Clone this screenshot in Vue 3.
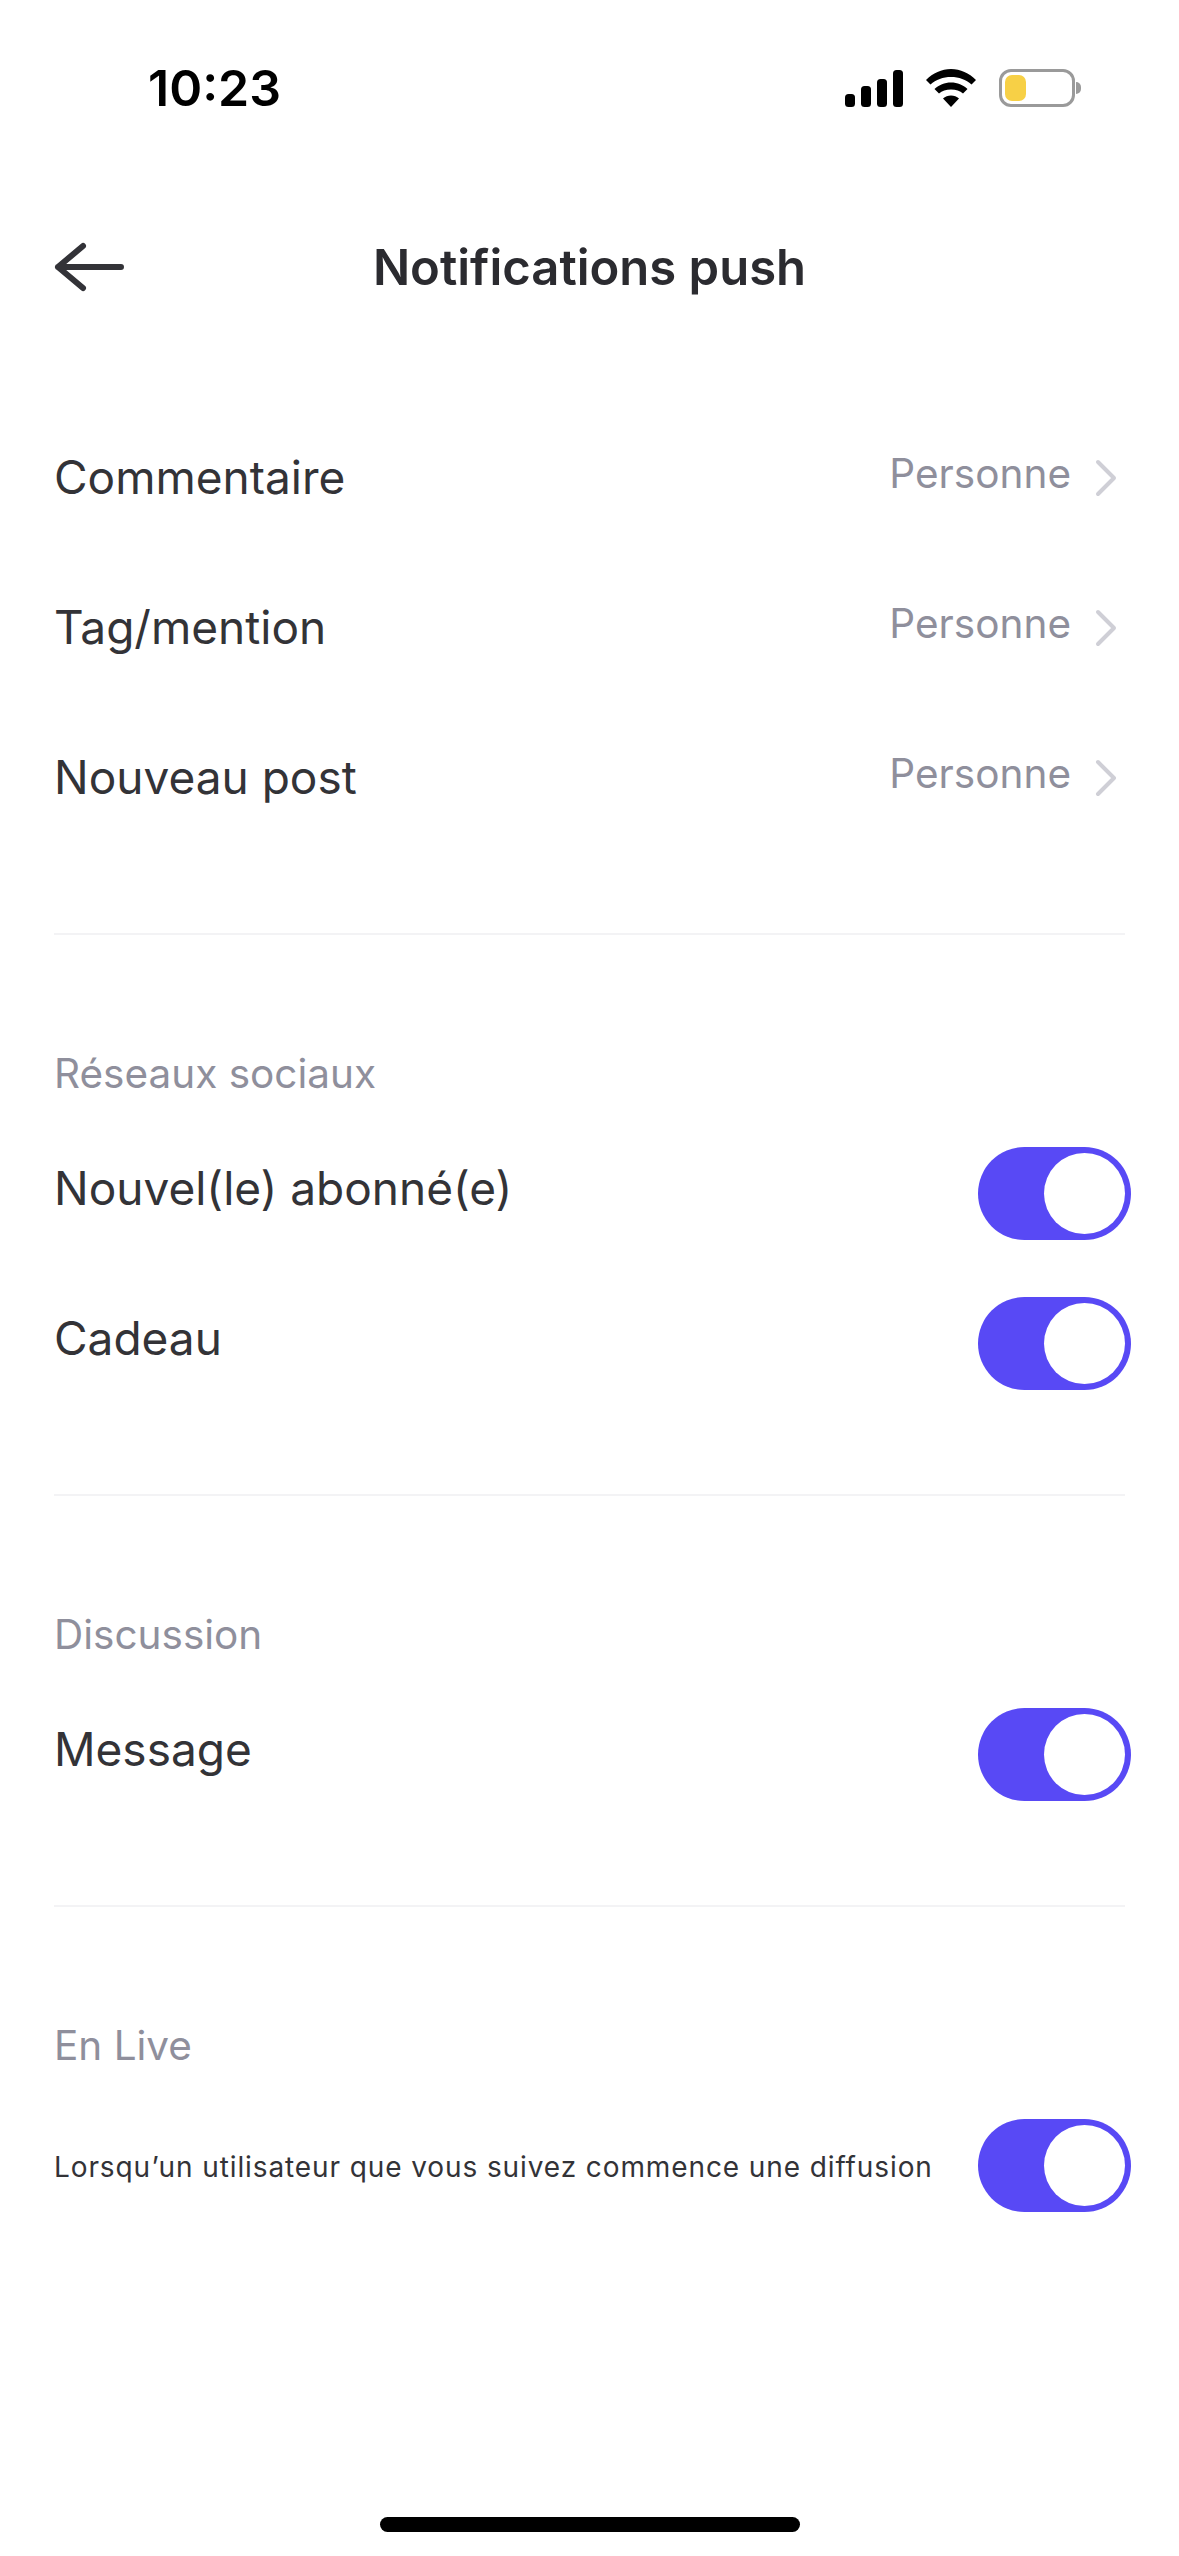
<script setup>
const pushRows = ['Commentaire', 'Tag/mention', 'Nouveau post']

const sections = [
    { title: 'Réseaux sociaux', rows: ['Nouvel(le) abonné(e)', 'Cadeau'] },
    { title: 'Discussion', rows: ['Message'] },
]
</script>

<template>
    <div class="screen">
        <div class="status-bar">
            <span class="status-time">10:23</span>
            <div class="status-icons">
                <svg width="58" height="37" viewBox="0 0 58 37">
                    <rect x="0" y="24" width="10" height="13" rx="3.500" />
                    <rect x="16" y="16" width="10" height="21" rx="3.500" />
                    <rect x="32" y="9" width="10" height="28" rx="3.500" />
                    <rect x="48" y="0" width="10" height="37" rx="3.500" />
                </svg>
                <svg width="50" height="38" viewBox="0 0 50 38">
                    <path d="M25 0C15.500 0 7 4 0 11L4.500 15.500C10 10.500 17 8 25 8S40 10.500 45.500 15.500L50 11C43 4 34.500 0 25 0Z" />
                    <path d="M25 13.500C18.500 13.500 13 16 8.500 20L13 24.500C16 22 20 20.500 25 20.500S34 22 37 24.500L41.500 20C37 16 31.500 13.500 25 13.500Z" />
                    <path d="M25 26.500C22 26.500 19.200 27.500 17 29.500L25 38L33 29.500C30.800 27.500 28 26.500 25 26.500Z" />
                </svg>
                <div class="battery">
                    <div class="battery-body">
                        <div class="battery-fill" />
                    </div>
                    <div class="battery-nub" />
                </div>
            </div>
        </div>

        <div class="nav-bar">
            <svg width="72" height="52" viewBox="0 0 72 52">
                <path d="M30 5L5 26L30 47M5 26H68" fill="none" stroke="#333338" stroke-width="6" stroke-linecap="round" stroke-linejoin="round" />
            </svg>
            <h1 class="nav-title">Notifications push</h1>
        </div>

        <div class="push-group">
            <div v-for="row in pushRows" :key="row" class="row">
                <span class="row-label">{{ row }}</span>
                <div class="row-value">
                    <span class="row-value-text">Personne</span>
                    <svg class="chevron" width="24" height="40" viewBox="0 0 24 40">
                        <path d="M4 4L20 20L4 36" fill="none" stroke="#cfcfd6" stroke-width="4" stroke-linecap="round" stroke-linejoin="round" />
                    </svg>
                </div>
            </div>
        </div>

        <section v-for="section in sections" :key="section.title" class="section">
            <div class="section-title">{{ section.title }}</div>
            <div v-for="row in section.rows" :key="row" class="row toggle-row">
                <span class="row-label row-label-raised">{{ row }}</span>
                <div class="toggle"><span class="toggle-knob" /></div>
            </div>
        </section>

        <section class="section live-section">
            <div class="section-title">En Live</div>
            <div class="row toggle-row">
                <span class="row-label row-label-small">Lorsqu’un utilisateur que vous suivez commence une diffusion</span>
                <div class="toggle"><span class="toggle-knob" /></div>
            </div>
        </section>

        <div class="home-indicator" />
    </div>
</template>

<style>
    html,
    body {
        margin: 0;
        background: #fff;
    }
</style>

<style scoped>
    .screen {
        width: 1179px;
        height: 2556px;
        overflow: hidden;
        display: flex;
        flex-direction: column;
        background: #fff;
        font-family: Inter, "Liberation Sans", sans-serif;
        color: #333337;
    }

    .status-bar {
        height: 68px;
        padding: 54px 98px 0 148px;
        margin-bottom: 109px;
        display: flex;
        justify-content: space-between;
        align-items: center;
    }

    .status-time {
        font-size: 50px;
        font-weight: 600;
        color: #000;
    }

    .status-icons {
        display: flex;
        align-items: center;
        gap: 23px;
    }

    .status-icons svg {
        fill: #000;
        display: block;
    }

    .battery {
        display: flex;
        align-items: center;
        gap: 1px;
    }

    .battery-body {
        box-sizing: border-box;
        width: 76px;
        height: 38px;
        padding: 3px;
        border: 3px solid #9a9a9a;
        border-radius: 12px;
    }

    .battery-fill {
        width: 21px;
        height: 100%;
        border-radius: 7px;
        background: #f7d046;
    }

    .battery-nub {
        width: 5px;
        height: 12px;
        border-radius: 0 6px 6px 0;
        background: #9a9a9a;
    }

    .nav-bar {
        height: 72px;
        padding: 0 53px;
        display: grid;
        grid-template-columns: 1fr auto 1fr;
        align-items: center;
    }

    .nav-title {
        margin: 0;
        font-size: 49px;
        font-weight: 600;
        color: #2b2b30;
    }

    .push-group {
        margin: 99px 54px 0;
        padding-bottom: 81px;
        border-bottom: 2px solid #f3f3f5;
    }

    .row {
        display: flex;
        align-items: center;
        justify-content: space-between;
        height: 150px;
    }

    .row-label {
        font-size: 46px;
        font-weight: 400;
    }

    .row-label-raised {
        padding-bottom: 10px;
    }

    .row-label-small {
        padding-top: 3px;
        font-size: 28px;
        letter-spacing: 0.9px;
    }

    .row-value {
        display: flex;
        align-items: center;
        gap: 23px;
        margin-right: 7px;
        font-size: 40.500px;
        color: #8f8f9c;
    }

    .row-value-text {
        padding-bottom: 8px;
    }

    .chevron {
        margin-top: 2px;
    }

    .section {
        margin: 0 54px;
        padding-top: 113px;
        padding-bottom: 76px;
        border-bottom: 2px solid #f3f3f5;
    }

    .live-section {
        border-bottom: none;
    }

    .section-title {
        font-size: 40.500px;
        line-height: 52px;
        margin-bottom: 18px;
        color: #8f8f9c;
    }

    .toggle-row {
        margin-right: -6px;
    }

    .toggle {
        box-sizing: border-box;
        width: 153px;
        height: 93px;
        padding: 6px;
        display: flex;
        justify-content: flex-end;
        flex: none;
        border-radius: 47px;
        background: #5849f5;
    }

    .toggle-knob {
        width: 81px;
        height: 81px;
        border-radius: 50%;
        background: #fff;
    }

    .home-indicator {
        align-self: center;
        width: 420px;
        height: 15px;
        margin-top: auto;
        margin-bottom: 24px;
        border-radius: 8px;
        background: #000;
    }
</style>
